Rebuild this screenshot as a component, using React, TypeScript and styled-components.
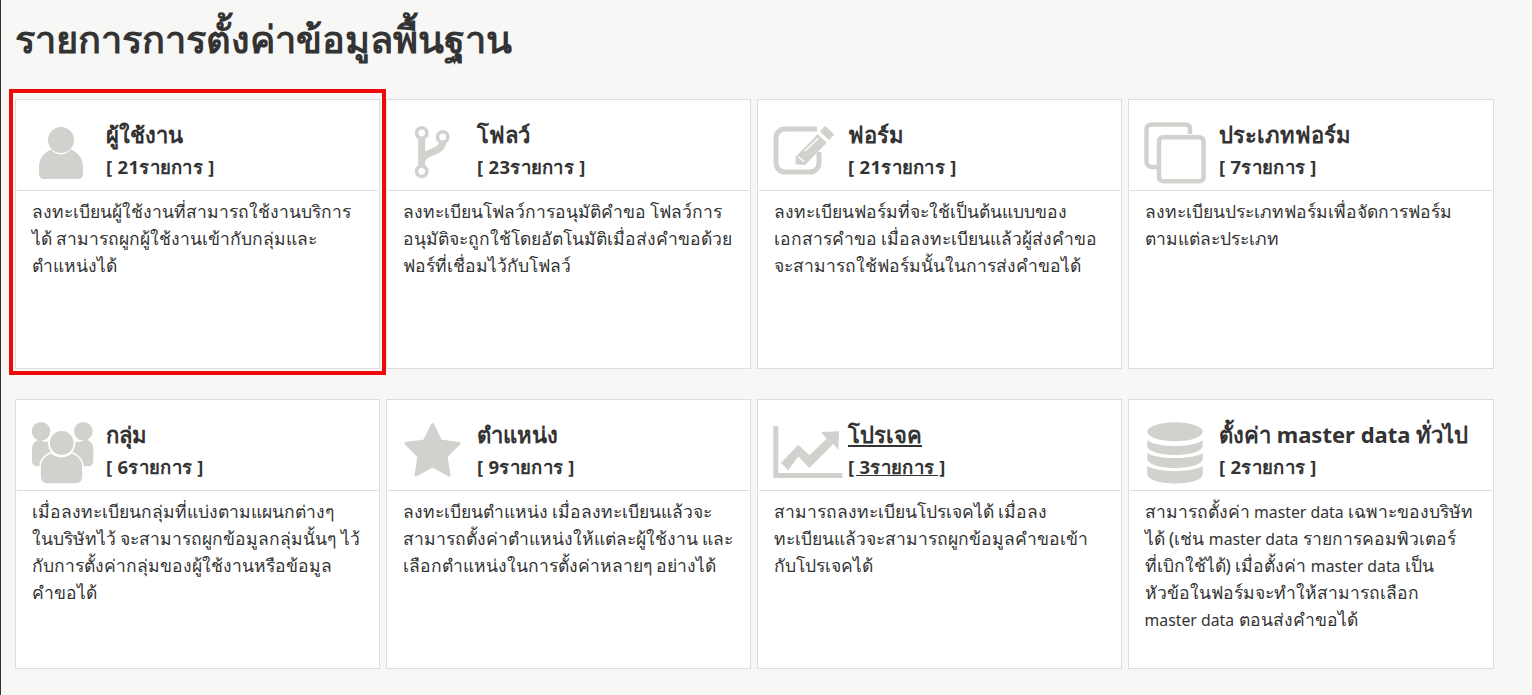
import React from "react";
import styled, { createGlobalStyle } from "styled-components";

const Global = createGlobalStyle`
  html, body { margin: 0; padding: 0; background: #f7f7f5; }
  body { font-family: "Noto Sans", "Open Sans", sans-serif; color: #333; }
`;

const Page = styled.div`
  position: relative;
  width: 1532px;
  height: 695px;
  box-sizing: border-box;
  border-left: 1px solid #333;
  padding: 14px 0 0 14px;
  overflow: hidden;
`;

const Title = styled.h1`
  margin: 0;
  font-size: 38px;
  line-height: 48px;
  font-weight: 700;
  color: #333;
`;

const Grid = styled.div`
  display: grid;
  grid-template-columns: repeat(3, 365px) 366px;
  grid-auto-rows: 270px;
  column-gap: 6px;
  row-gap: 30px;
  margin-top: 37px;
`;

const Card = styled.section`
  box-sizing: border-box;
  background: #fff;
  border: 1px solid #ddd;
  padding: 0 1px;
`;

const CardHead = styled.header`
  display: flex;
  height: 90px;
  border-bottom: 1px solid #ddd;
`;

const IconCell = styled.svg`
  flex: none;
  width: 70px;
  height: 64px;
  margin: 20px 5px 0 14px;
  fill: #d1d2cd;
  overflow: visible;
`;

const HeadText = styled.div<{ $link?: boolean }>`
  display: flex;
  flex-direction: column;
  padding-top: 19px;
  font-weight: 700;
  text-decoration: ${(p) => (p.$link ? "underline" : "none")};
`;

const CardName = styled.div`
  font-size: 22px;
  line-height: 30px;
  white-space: nowrap;
`;

const Count = styled.div`
  font-size: 18.5px;
  line-height: 24px;
  letter-spacing: 0.3px;
  margin-top: 6px;
  white-space: pre;
`;

const Desc = styled.p`
  margin: 0;
  padding: 7px 14px 7px 14.5px;
  font-size: 17.5px;
  line-height: 27px;
  color: #333;
  white-space: pre-line;
`;

const Latin = styled.span`
  font-size: 15.8px;
  line-height: 1;
`;

const Highlight = styled.div`
  position: absolute;
  left: 8px;
  top: 89px;
  width: 377px;
  height: 286px;
  box-sizing: border-box;
  border: 4px solid #ee0a0a;
  pointer-events: none;
`;

const UserIcon = () => (
  <IconCell viewBox="0 0 70 64">
    <circle cx="30" cy="20" r="13" />
    <path d="M8 54V47C8 39 13 32 20 29.5C26 36 34 36 40 29.5C47 32 52 39 52 47V54C52 57 50 59 47 59H13C10 59 8 57 8 54Z" />
  </IconCell>
);

const ForkIcon = () => (
  <IconCell viewBox="0 0 70 64">
    <path d="M19.7 19V46M19.7 41C21 34 29 33 35 30C39.5 27.5 40.7 25.5 40.7 22" fill="none" stroke="#d1d2cd" strokeWidth="7" />
    <circle cx="19.7" cy="13" r="5.2" fill="#fff" stroke="#d1d2cd" strokeWidth="3.6" />
    <circle cx="40.7" cy="17" r="5.2" fill="#fff" stroke="#d1d2cd" strokeWidth="3.6" />
    <circle cx="19.7" cy="51.3" r="5.2" fill="#fff" stroke="#d1d2cd" strokeWidth="3.6" />
  </IconCell>
);

const EditIcon = () => (
  <IconCell viewBox="0 0 70 64">
    <path d="M44 9H12C7 9 3 13 3 18V43C3 48 7 52 12 52H37C42 52 46 48 46 43V32" fill="none" stroke="#d1d2cd" strokeWidth="5" />
    <path d="M47 11.7L51 6.8Q52 5.8 53 6.8L60.5 13.5Q61.5 14.5 60.5 15.5L56 20Z" />
    <path d="M44.7 14.3L53.7 22.7L32 45L22.7 44.3L22.7 36.7Z" />
    <path d="M32 31L45.3 18.3" stroke="#fff" strokeWidth="1.4" fill="none" />
    <path d="M25.3 36.7L31.3 41.7" stroke="#fff" strokeWidth="1.4" fill="none" />
  </IconCell>
);

const CopyIcon = () => (
  <IconCell viewBox="0 0 70 64">
    <path d="M46 14V9C46 6 44 4.5 41 4.5H8C5 4.5 2.5 6 2.5 9V42C2.5 45 5 47 8 47H13" fill="none" stroke="#d1d2cd" strokeWidth="4.5" />
    <rect x="15" y="17.2" width="44.5" height="44" rx="4" fill="none" stroke="#d1d2cd" strokeWidth="4.5" />
  </IconCell>
);

const GroupIcon = () => (
  <IconCell viewBox="0 0 70 64">
    <circle cx="10" cy="11.3" r="9.3" />
    <circle cx="52.3" cy="11.3" r="9.3" />
    <path d="M1 29C1 23 5 20.5 9 19.5C13 23 20 22 25 20V46.3H6C3 46.3 1 44 1 41Z" />
    <path d="M62.3 29C62.3 23 58.3 20.5 54.3 19.5C50.3 23 43.3 22 38.3 20V46.3H57.3C60.3 46.3 62.3 44 62.3 41Z" />
    <circle cx="30.7" cy="23" r="12.8" stroke="#fff" strokeWidth="1.8" />
    <path d="M9 56V47C9 40 14 35 20 32.5C26 38 35 38 41 32.5C47 35 52 40 52 47V56C52 61 49 64 45 64H16C12 64 9 61 9 56Z" stroke="#fff" strokeWidth="1.6" />
  </IconCell>
);

const StarIcon = () => (
  <IconCell viewBox="0 0 70 64">
    <path d="M30.5 4.5L38.5 21L57 23.5L44 36.5L47 55L30.5 46L14 55L17 36.5L4 23.5L22.5 21Z" stroke="#d1d2cd" strokeWidth="3" strokeLinejoin="round" />
  </IconCell>
);

const ChartIcon = () => (
  <IconCell viewBox="0 0 70 64">
    <path d="M0.3 6.3H5.3V53H69.3V58H0.3Z" />
    <path d="M8 43L25.3 24.7L36.3 35.3L53.7 18.7L48 12L66 11.3L65.3 29.7L60.3 24L36.3 48L25.3 36.3L15.3 50.3Z" />
  </IconCell>
);

const DatabaseIcon = () => (
  <IconCell viewBox="0 0 70 64">
    <ellipse cx="31" cy="11.7" rx="27.7" ry="9.5" />
    <path d="M3.3 20C8 24 20 26 31 26C42 26 54 24 58.7 20V26C58.7 31 46 35 31 35C16 35 3.3 31 3.3 26Z" />
    <path d="M3.3 33C8 36.5 20 38 31 38C42 38 54 36.5 58.7 33V39C58.7 44 46 48 31 48C16 48 3.3 44 3.3 39Z" />
    <path d="M3.3 46C8 49.5 20 51 31 51C42 51 54 49.5 58.7 46V54C58.7 60 46 63.5 31 63.5C16 63.5 3.3 60 3.3 54Z" />
  </IconCell>
);

const cards = [
  { name: "ผู้ใช้งาน", count: "21", Icon: UserIcon, desc: "ลงทะเบียนผู้ใช้งานที่สามารถใช้งานบริการ\nได้ สามารถผูกผู้ใช้งานเข้ากับกลุ่มและ\nตำแหน่งได้" },
  { name: "โฟลว์", count: "23", Icon: ForkIcon, desc: "ลงทะเบียนโฟลว์การอนุมัติคำขอ โฟลว์การ\nอนุมัติจะถูกใช้โดยอัตโนมัติเมื่อส่งคำขอด้วย\nฟอร์ที่เชื่อมไว้กับโฟลว์" },
  { name: "ฟอร์ม", count: "21", Icon: EditIcon, desc: "ลงทะเบียนฟอร์มที่จะใช้เป็นต้นแบบของ\nเอกสารคำขอ เมื่อลงทะเบียนแล้วผู้ส่งคำขอ\nจะสามารถใช้ฟอร์มนั้นในการส่งคำขอได้" },
  { name: "ประเภทฟอร์ม", count: "7", Icon: CopyIcon, desc: "ลงทะเบียนประเภทฟอร์มเพื่อจัดการฟอร์ม\nตามแต่ละประเภท" },
  { name: "กลุ่ม", count: "6", Icon: GroupIcon, desc: "เมื่อลงทะเบียนกลุ่มที่แบ่งตามแผนกต่างๆ\nในบริษัทไว้ จะสามารถผูกข้อมูลกลุ่มนั้นๆ ไว้\nกับการตั้งค่ากลุ่มของผู้ใช้งานหรือข้อมูล\nคำขอได้" },
  { name: "ตำแหน่ง", count: "9", Icon: StarIcon, desc: "ลงทะเบียนตำแหน่ง เมื่อลงทะเบียนแล้วจะ\nสามารถตั้งค่าตำแหน่งให้แต่ละผู้ใช้งาน และ\nเลือกตำแหน่งในการตั้งค่าหลายๆ อย่างได้" },
  { name: "โปรเจค", count: "3", Icon: ChartIcon, link: true, desc: "สามารถลงทะเบียนโปรเจคได้ เมื่อลง\nทะเบียนแล้วจะสามารถผูกข้อมูลคำขอเข้า\nกับโปรเจคได้" },
  { name: "ตั้งค่า master data ทั่วไป", count: "2", Icon: DatabaseIcon, desc: "สามารถตั้งค่า master data เฉพาะของบริษัท\nได้ (เช่น master data รายการคอมพิวเตอร์\nที่เบิกใช้ได้) เมื่อตั้งค่า master data เป็น\nหัวข้อในฟอร์มจะทำให้สามารถเลือก\nmaster data ตอนส่งคำขอได้" },
];

const withLatin = (text: string) =>
  text.split(/(master data)/).map((part, i) =>
    part === "master data" ? <Latin key={i}>{part}</Latin> : part
  );

export default function App() {
  return (
    <Page>
      <Global />
      <Title>รายการการตั้งค่าข้อมูลพื้นฐาน</Title>
      <Grid>
        {cards.map(({ name, count, Icon, desc, link }) => (
          <Card key={name}>
            <CardHead>
              <Icon />
              <HeadText $link={link}>
                <CardName>{name}</CardName>
                <Count>{`[ ${count}รายการ ]`}</Count>
              </HeadText>
            </CardHead>
            <Desc>{withLatin(desc)}</Desc>
          </Card>
        ))}
      </Grid>
      <Highlight />
    </Page>
  );
}
